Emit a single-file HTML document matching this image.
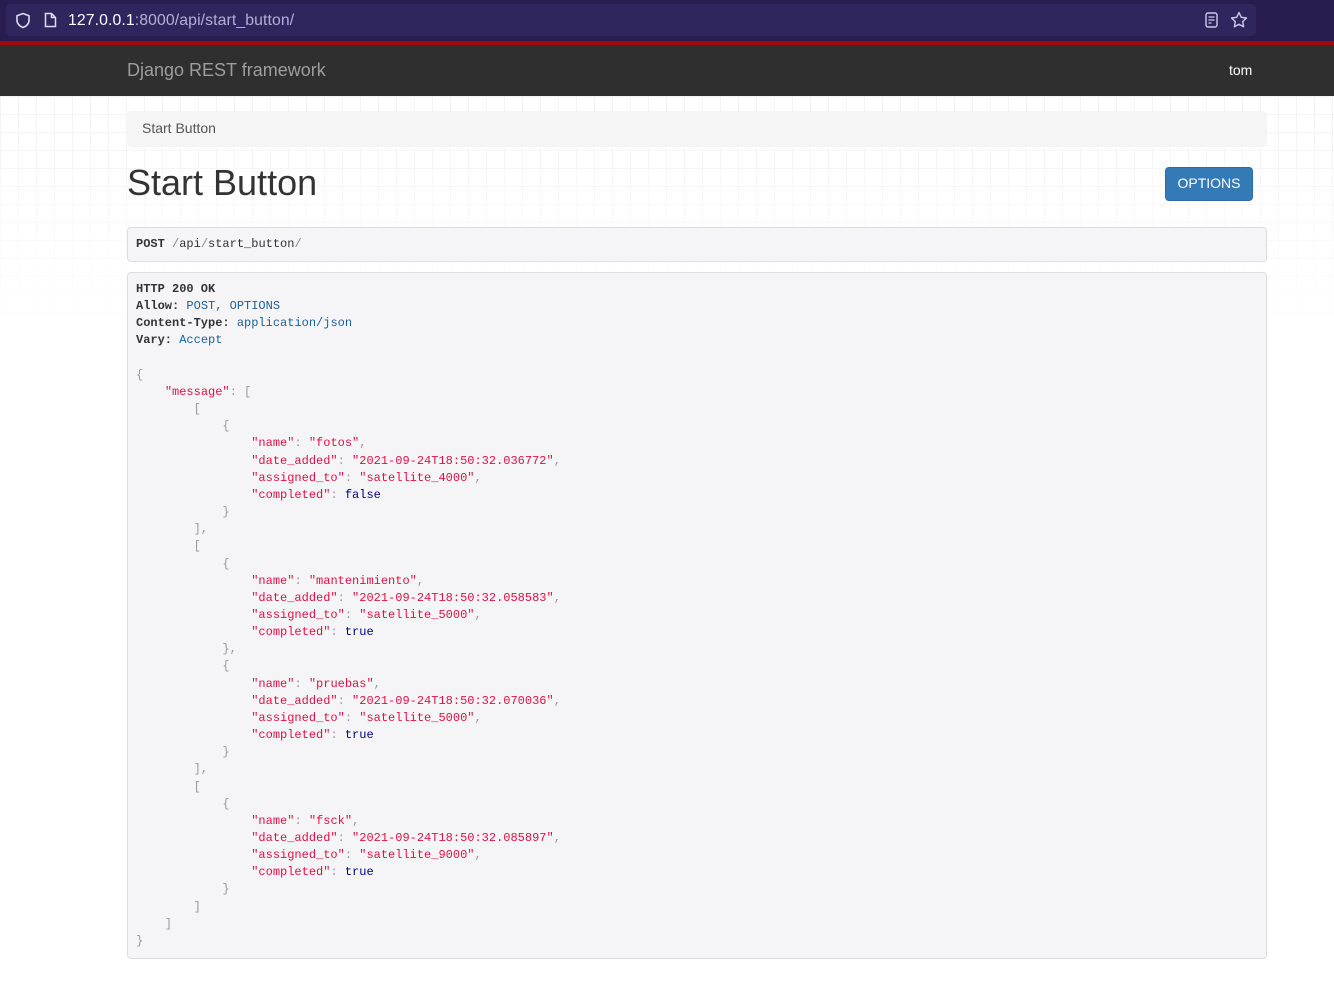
<!DOCTYPE html>
<html><head><meta charset="utf-8">
<style>
*{margin:0;padding:0;box-sizing:border-box}
body{width:1334px;height:983px;overflow:hidden;background:#fff;font-family:"Liberation Sans",sans-serif;position:relative}
.top{position:absolute;left:0;top:0;width:1334px;height:41px;background:#271d4e}
.url{position:absolute;left:6px;top:4px;width:1250px;height:32px;background:#30265e;border-radius:4px}
.url .t{position:absolute;left:62px;top:8px;font-size:15.8px;color:#b5aed6;letter-spacing:.1px}
.url .t b{font-weight:normal;color:#fff}
.red{position:absolute;left:0;top:41px;width:1334px;height:4px;background:#a30a0a}
.nav{position:absolute;left:0;top:45px;width:1334px;height:51px;background:#2f2f2f}
.brand{position:absolute;left:127px;top:15px;font-size:18px;color:#9d9d9d}
.user{position:absolute;left:1229px;top:17px;font-size:14px;color:#fff}
.grid{position:absolute;left:0;top:96px;width:1334px;height:250px;
background-image:linear-gradient(#f3f3f3 1px,transparent 1px),linear-gradient(90deg,#f3f3f3 1px,transparent 1px);background-size:18px 18px;
-webkit-mask-image:linear-gradient(#000,rgba(0,0,0,0));}
.bc{position:absolute;left:127px;top:111px;width:1140px;height:36px;background:#f5f5f5;border-radius:4px;font-size:14px;color:#555;padding:9px 15px}
h1{position:absolute;left:127px;top:162px;font-size:36px;font-weight:normal;color:#333}
.btn{position:absolute;left:1165px;top:167px;width:88px;height:34px;background:#337ab7;border:1px solid #2e6da4;border-radius:4px;color:#fff;font-size:14px;text-align:center;line-height:31px}
.req{position:absolute;left:127px;top:227px;width:1140px;height:35px;background:#f5f5f7;border:1px solid #ddd;border-radius:4px;font:12px "Liberation Mono",monospace;color:#333;padding:9px 8px}
.g{color:#888}
.resp{position:absolute;left:127px;top:272px;width:1140px;height:687px;background:#f5f5f7;border:1px solid #ddd;border-radius:4px}
pre{position:absolute;left:8px;top:8px;font:12px/17.15px "Liberation Mono",monospace;color:#333}
.k{color:#dd1144}.s{color:#dd1144}.p{color:#999}.v{color:#1b5f9b}.b{color:#000080}
</style></head><body>
<div class="top"><div class="url">
<svg style="position:absolute;left:9px;top:8px" width="16" height="17" viewBox="0 0 16 17"><path d="M8 1.5L2 3.8v4.5c0 3.5 2.7 6.2 6 7.2 3.3-1 6-3.7 6-7.2V3.8z" fill="none" stroke="#e0dcf0" stroke-width="1.6"/></svg>
<svg style="position:absolute;left:38px;top:8px" width="13" height="16" viewBox="0 0 13 16"><path d="M1.5 1.5h6l4 4v9h-10z M7.5 1.5v4h4" fill="none" stroke="#e0dcf0" stroke-width="1.5"/></svg>
<div class="t"><b>127.0.0.1</b>:8000/api/start_button/</div>
<svg style="position:absolute;left:1199px;top:8px" width="13" height="16" viewBox="0 0 13 16"><rect x="1" y="1" width="11" height="14" rx="2" fill="none" stroke="#cfc8ee" stroke-width="1.4"/><path d="M3.5 5h6M3.5 8h6M3.5 11h3" stroke="#cfc8ee" stroke-width="1.3"/></svg>
<svg style="position:absolute;left:1224px;top:7px" width="18" height="18" viewBox="0 0 18 18"><path d="M9 1.5l2.3 4.8 5.2.7-3.8 3.6.9 5.2L9 13.3 4.4 15.8l.9-5.2L1.5 7l5.2-.7z" fill="none" stroke="#cfc8ee" stroke-width="1.4" stroke-linejoin="round"/></svg>
</div></div>
<div class="red"></div>
<div class="nav"><div class="brand">Django REST framework</div><div class="user">tom</div></div>
<div class="grid"></div>
<div class="bc">Start Button</div>
<h1>Start Button</h1>
<div class="btn">OPTIONS</div>
<div class="req"><b>POST</b> <span class="g">/</span>api<span class="g">/</span>start_button<span class="g">/</span></div>
<div class="resp"><pre><b>HTTP 200 OK</b>
<b>Allow:</b> <span class="v">POST, OPTIONS</span>
<b>Content-Type:</b> <span class="v">application/json</span>
<b>Vary:</b> <span class="v">Accept</span>

<span class="p">{</span>
    <span class="k">"message"</span><span class="p">: [</span>
<span class="p">        [
            {</span>
                <span class="k">"name"</span><span class="p">: </span><span class="s">"fotos"</span><span class="p">,</span>
                <span class="k">"date_added"</span><span class="p">: </span><span class="s">"2021-09-24T18:50:32.036772"</span><span class="p">,</span>
                <span class="k">"assigned_to"</span><span class="p">: </span><span class="s">"satellite_4000"</span><span class="p">,</span>
                <span class="k">"completed"</span><span class="p">: </span><span class="b">false</span>
<span class="p">            }
        ],
        [
            {</span>
                <span class="k">"name"</span><span class="p">: </span><span class="s">"mantenimiento"</span><span class="p">,</span>
                <span class="k">"date_added"</span><span class="p">: </span><span class="s">"2021-09-24T18:50:32.058583"</span><span class="p">,</span>
                <span class="k">"assigned_to"</span><span class="p">: </span><span class="s">"satellite_5000"</span><span class="p">,</span>
                <span class="k">"completed"</span><span class="p">: </span><span class="b">true</span>
<span class="p">            },
            {</span>
                <span class="k">"name"</span><span class="p">: </span><span class="s">"pruebas"</span><span class="p">,</span>
                <span class="k">"date_added"</span><span class="p">: </span><span class="s">"2021-09-24T18:50:32.070036"</span><span class="p">,</span>
                <span class="k">"assigned_to"</span><span class="p">: </span><span class="s">"satellite_5000"</span><span class="p">,</span>
                <span class="k">"completed"</span><span class="p">: </span><span class="b">true</span>
<span class="p">            }
        ],
        [
            {</span>
                <span class="k">"name"</span><span class="p">: </span><span class="s">"fsck"</span><span class="p">,</span>
                <span class="k">"date_added"</span><span class="p">: </span><span class="s">"2021-09-24T18:50:32.085897"</span><span class="p">,</span>
                <span class="k">"assigned_to"</span><span class="p">: </span><span class="s">"satellite_9000"</span><span class="p">,</span>
                <span class="k">"completed"</span><span class="p">: </span><span class="b">true</span>
<span class="p">            }
        ]
    ]
}</span></pre></div>
</body></html>
